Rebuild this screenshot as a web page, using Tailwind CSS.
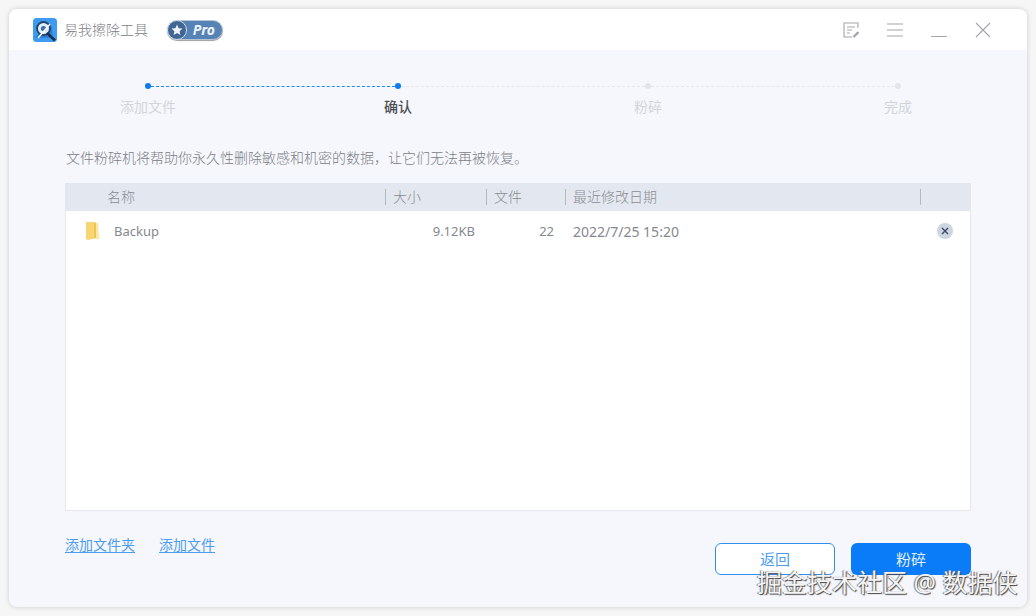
<!DOCTYPE html>
<html lang="zh-CN">
<head>
    <meta charset="UTF-8">
    <title>易我擦除工具</title>
    <script src="https://cdn.jsdelivr.net/npm/@tailwindcss/browser@4"></script>
</head>
<body class="w-[1036px] h-[616px] overflow-hidden bg-[#f6f6f6] pt-[9px] pl-[9px] font-['Noto_Sans','Noto_Sans_CJK_SC',sans-serif]">
<div class="relative w-[1018px] h-[598px] rounded-lg overflow-hidden bg-[#f5f7fc] shadow-[0_0_5px_rgba(0,0,0,0.18)]">
    <!-- title bar -->
    <div class="h-[41px] bg-white flex items-center pl-6 text-[#9a9da3]">
        <svg class="w-6 h-6 mt-[1px]" viewBox="0 0 24 24">
            <rect width="24" height="24" rx="3.5" fill="#3d9bf2"/>
            <path d="M2 20 L12 6 L19 9 L20 20 Z" fill="#2f7fd8"/>
            <circle cx="10.5" cy="10.5" r="6.5" fill="#dfeefb" stroke="#23476f" stroke-width="2"/>
            <circle cx="10.5" cy="10.5" r="2.6" fill="#3d6fa8"/>
            <path d="M14 15 L22 22.5" stroke="#17304f" stroke-width="2.6"/>
            <path d="M5 20 L17 6" stroke="#ffffff" stroke-width="1.4"/>
        </svg>
        <span class="ml-[7px] text-[14px] leading-none font-light text-[#7d8086]">易我擦除工具</span>
        <div class="ml-[19px] mt-[1px] relative w-[56px] h-[20px] rounded-full bg-[#5583b5] border border-[#b7c4d6] shadow-[0_1px_1px_rgba(60,60,60,0.5)] flex items-center justify-end pr-[7px]">
            <span class="absolute left-[-1px] top-[-1px] w-5 h-5 rounded-full bg-[#3f6695] border border-[#d4deea] flex items-center justify-center">
                <svg class="w-3 h-3" viewBox="0 0 12 12"><path d="M6 .6 7.6 4.2 11.5 4.6 8.6 7.2 9.4 11 6 9.1 2.6 11 3.4 7.2.5 4.6 4.4 4.2Z" fill="#eef3f9"/></svg>
            </span>
            <span class="text-[14px] leading-none font-bold italic text-[#eef3f9]">Pro</span>
        </div>
        <div class="ml-auto flex items-center">
            <svg class="w-4 h-4" viewBox="0 0 16 16" fill="none" stroke="#a3a5a9" stroke-width="1.1">
                <path d="M15 6V1H1v14h8"/>
                <path d="M4 5h8M4 8h5M4 11h3"/>
                <path d="M10.5 15 15.5 10" stroke-width="2.4"/>
            </svg>
            <svg class="ml-[28px] w-4 h-4" viewBox="0 0 16 16" fill="none" stroke="#a3a5a9" stroke-width="1.1">
                <path d="M0 2h16M0 8h16M0 14h16"/>
            </svg>
            <svg class="ml-[28px] w-4 h-4 mt-[1px]" viewBox="0 0 16 16" fill="none" stroke="#a3a5a9" stroke-width="1.1">
                <path d="M0 14.5h16"/>
            </svg>
            <svg class="ml-[28px] mr-[36px] w-4 h-4" viewBox="0 0 16 16" fill="none" stroke="#a3a5a9" stroke-width="1.1">
                <path d="M1 1 15 15M15 1 1 15"/>
            </svg>
        </div>
    </div>

    <!-- steps -->
    <div class="pl-[136px] pt-[33px] h-[6px] flex items-center box-content">
        <span class="w-[6px] h-[6px] rounded-full bg-[#0a7cf0]"></span>
        <span class="w-[244px] border-t border-dashed border-[#1a8af5]"></span>
        <span class="w-[6px] h-[6px] rounded-full bg-[#0a7cf0]"></span>
        <span class="w-[244px] border-t border-dashed border-[#e6e8ec]"></span>
        <span class="w-[6px] h-[6px] rounded-full bg-[#e3e5e9]"></span>
        <span class="w-[244px] border-t border-dashed border-[#e6e8ec]"></span>
        <span class="w-[6px] h-[6px] rounded-full bg-[#e3e5e9]"></span>
    </div>
    <div class="mt-[9px] pl-[14px] flex text-[14px] leading-[18px] text-[#d3d5d9]">
        <span class="w-[250px] text-center">添加文件</span>
        <span class="w-[250px] text-center font-medium text-[#4d4f53]">确认</span>
        <span class="w-[250px] text-center">粉碎</span>
        <span class="w-[250px] text-center">完成</span>
    </div>

    <p class="mt-[33px] ml-[57px] text-[14px] leading-[18px] font-light text-[#7d8086]">文件粉碎机将帮助你永久性删除敏感和机密的数据，让它们无法再被恢复。</p>

    <!-- file table -->
    <div class="mt-[16px] ml-[56px] w-[906px] h-[328px] bg-white border border-[#e6e8ee] border-t-0 rounded-t-sm">
        <div class="h-[28px] -mx-px bg-[#e3e8f0] flex items-center text-[14px] font-light text-[#8a8d93]">
            <span class="w-[321px] h-4 border-r border-[#b5b9c0] pl-[42px] leading-4">名称</span>
            <span class="w-[101px] h-4 border-r border-[#b5b9c0] pl-[7px] leading-4">大小</span>
            <span class="w-[79px] h-4 border-r border-[#b5b9c0] pl-[7px] leading-4">文件</span>
            <span class="w-[355px] h-4 border-r border-[#b5b9c0] pl-[7px] leading-4">最近修改日期</span>
        </div>
        <div class="h-[40px] flex items-center text-[13px] text-[#85888e]">
            <svg class="ml-[19px] w-4 h-5" viewBox="0 0 16 20">
                <path d="M1 1h9l1 1v15l-8 2-2-1Z" fill="#f7d572"/>
                <path d="M10 2h3l1 14 1 2H9Z" fill="#fbe6a3"/>
                <path d="M9 2h2v15H9Z" fill="#eec455"/>
            </svg>
            <span class="ml-[13px] w-[100px] pt-[2px]">Backup</span>
            <span class="w-[261px] text-right pt-[2px]">9.12KB</span>
            <span class="w-[79px] text-right pt-[2px]">22</span>
            <span class="ml-[19px] w-[320px] text-[14px]">2022/7/25 15:20</span>
            <span class="ml-[44px] w-4 h-4 rounded-full bg-[#cdd5e3] flex items-center justify-center">
                <svg class="w-2 h-2" viewBox="0 0 8 8" fill="none" stroke="#3c4660" stroke-width="1.4"><path d="M1 1 7 7M7 1 1 7"/></svg>
            </span>
        </div>
    </div>

    <!-- footer -->
    <div class="ml-[56px] w-[906px] flex items-start">
        <a class="mt-[24px] text-[14px] leading-[20px] text-[#4c9df0] underline underline-offset-2">添加文件夹</a>
        <a class="mt-[24px] ml-[24px] text-[14px] leading-[20px] text-[#4c9df0] underline underline-offset-2">添加文件</a>
        <button class="ml-auto mt-[32px] w-[120px] h-[32px] rounded-md bg-white border border-[#2f8fee] text-[15px] text-[#4c9df0]">返回</button>
        <button class="ml-[16px] mt-[32px] w-[120px] h-[32px] rounded-md bg-[#0a7cf8] text-[15px] text-[#e4f0fe]">粉碎</button>
    </div>

    <div class="absolute left-[748px] top-[557px] text-[25px] leading-[32px] whitespace-nowrap text-[#f5f5f5] [text-shadow:1px_1px_1px_#444,-1px_0_1px_#777]">掘金技术社区 @ 数据侠</div>
</div>
</body>
</html>
